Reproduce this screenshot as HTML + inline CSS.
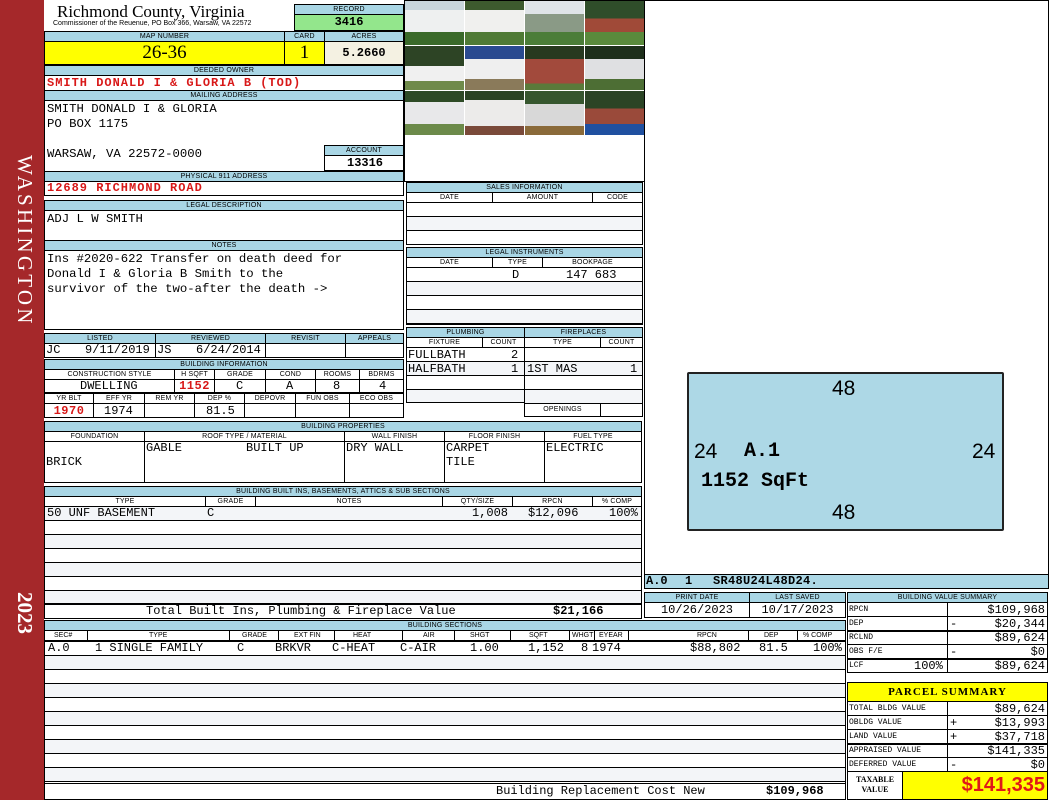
<!DOCTYPE html>
<html><head><meta charset="utf-8">
<style>
*{margin:0;padding:0;box-sizing:border-box}
body{width:1050px;height:800px;position:relative;background:#fff;overflow:hidden;font-family:"Liberation Mono",monospace;color:#000}
div{position:absolute}
.h{background:#a9d6e5;border:1px solid #000;font:7px/9px "Liberation Sans",sans-serif;text-align:center;height:11px;letter-spacing:.2px}
.w{background:#fff}
.b{border:1px solid #000}
.v{font:12px/14px "Liberation Mono",monospace;white-space:pre}
.r{color:#d81818;font-weight:bold;letter-spacing:1px}
.ph{width:59px;height:44px}
.lines{border:1px solid #000;background:repeating-linear-gradient(#fff 0 13px,#000 13px 14px,#f3f5f8 14px 27px,#000 27px 28px)}
.lines2{border:1px solid #000;background:repeating-linear-gradient(#f3f5f8 0 13px,#000 13px 14px,#fff 14px 27px,#000 27px 28px)}
.s{font:8px/14px "Liberation Mono",monospace}
.sg{position:absolute;left:2px;top:0}
</style></head><body>
<!-- sidebar -->
<div style="left:0;top:0;width:44px;height:800px;background:#a5282a"></div>
<div style="left:35px;top:155px;transform:rotate(90deg);transform-origin:0 0;font:21px/21px 'Liberation Serif',serif;color:#fff;white-space:nowrap;letter-spacing:3.2px">WASHINGTON</div>
<div style="left:35px;top:592px;transform:rotate(90deg);transform-origin:0 0;font:bold 21px/21px 'Liberation Serif',serif;color:#fff">2023</div>

<!-- header -->
<div style="left:57px;top:2px;font:17px/19px 'Liberation Serif',serif">Richmond County, Virginia</div>
<div style="left:53px;top:20px;font:7px/8px 'Liberation Sans',sans-serif">Commissioner of the Reuenue, PO Box 366, Warsaw, VA 22572</div>
<div class="h" style="left:294px;top:4px;width:110px">RECORD</div>
<div class="b" style="left:294px;top:14px;width:110px;height:17px;background:#93e68c;text-align:center;font:bold 12px/15px 'Liberation Mono',monospace">3416</div>

<div class="h" style="left:44px;top:31px;width:241px">MAP NUMBER</div>
<div class="h" style="left:284px;top:31px;width:41px">CARD</div>
<div class="h" style="left:324px;top:31px;width:80px">ACRES</div>
<div class="b" style="left:44px;top:41px;width:241px;height:24px;background:#ffff00;text-align:center;font:19px/22px 'Liberation Serif',serif">26-36</div>
<div class="b" style="left:284px;top:41px;width:41px;height:24px;background:#ffff00;text-align:center;font:19px/22px 'Liberation Serif',serif">1</div>
<div class="b" style="left:324px;top:41px;width:80px;height:24px;background:#f4f1e2;text-align:center;font:bold 12px/22px 'Liberation Mono',monospace">5.2660</div>

<div class="h" style="left:44px;top:65px;width:360px">DEEDED OWNER</div>
<div class="b" style="left:44px;top:75px;width:360px;height:16px"></div>
<div class="v r" style="left:47px;top:76px">SMITH DONALD I &amp; GLORIA B (TOD)</div>
<div class="h" style="left:44px;top:90px;width:360px">MAILING ADDRESS</div>
<div class="b" style="left:44px;top:100px;width:360px;height:72px"></div>
<div class="v" style="left:47px;top:102px;font-size:12.3px;line-height:15px">SMITH DONALD I &amp; GLORIA
PO BOX 1175

WARSAW, VA 22572-0000</div>
<div class="h" style="left:324px;top:145px;width:80px">ACCOUNT</div>
<div class="b v" style="left:324px;top:155px;width:80px;height:16px;font-weight:bold;padding-left:22px;line-height:15px">13316</div>
<div class="h" style="left:44px;top:171px;width:360px">PHYSICAL 911 ADDRESS</div>
<div class="b" style="left:44px;top:181px;width:360px;height:15px"></div>
<div class="v r" style="left:47px;top:181px">12689 RICHMOND ROAD</div>

<div class="h" style="left:44px;top:200px;width:360px">LEGAL DESCRIPTION</div>
<div class="b" style="left:44px;top:210px;width:360px;height:31px"></div>
<div class="v" style="left:47px;top:212px;font-size:12.3px">ADJ L W SMITH</div>
<div class="h" style="left:44px;top:240px;width:360px">NOTES</div>
<div class="b" style="left:44px;top:250px;width:360px;height:80px"></div>
<div class="v" style="left:47px;top:252px;font-size:12.3px;line-height:15px">Ins #2020-622 Transfer on death deed for
Donald I &amp; Gloria B Smith to the
survivor of the two-after the death -&gt;</div>

<!-- listed -->
<div class="h" style="left:44px;top:333px;width:112px">LISTED</div>
<div class="h" style="left:155px;top:333px;width:111px">REVIEWED</div>
<div class="h" style="left:265px;top:333px;width:81px">REVISIT</div>
<div class="h" style="left:345px;top:333px;width:59px">APPEALS</div>
<div class="b" style="left:44px;top:343px;width:112px;height:15px"></div>
<div class="b" style="left:155px;top:343px;width:111px;height:15px"></div>
<div class="b" style="left:265px;top:343px;width:81px;height:15px"></div>
<div class="b" style="left:345px;top:343px;width:59px;height:15px"></div>
<div class="v" style="left:46px;top:343px">JC</div>
<div class="v" style="left:85px;top:343px">9/11/2019</div>
<div class="v" style="left:157px;top:343px">JS</div>
<div class="v" style="left:196px;top:343px">6/24/2014</div>

<!-- building info -->
<div class="h" style="left:44px;top:359px;width:360px">BUILDING INFORMATION</div>
<div class="h w" style="left:44px;top:369px;width:131px">CONSTRUCTION STYLE</div>
<div class="h w" style="left:174px;top:369px;width:41px">H SQFT</div>
<div class="h w" style="left:214px;top:369px;width:52px">GRADE</div>
<div class="h w" style="left:265px;top:369px;width:51px">COND</div>
<div class="h w" style="left:315px;top:369px;width:45px">ROOMS</div>
<div class="h w" style="left:359px;top:369px;width:45px">BDRMS</div>
<div class="b" style="left:44px;top:379px;width:131px;height:14px"></div>
<div class="b" style="left:174px;top:379px;width:41px;height:14px"></div>
<div class="b" style="left:214px;top:379px;width:52px;height:14px"></div>
<div class="b" style="left:265px;top:379px;width:51px;height:14px"></div>
<div class="b" style="left:315px;top:379px;width:45px;height:14px"></div>
<div class="b" style="left:359px;top:379px;width:45px;height:14px"></div>
<div class="v" style="left:80px;top:379px">DWELLING</div>
<div class="v r" style="left:174px;top:379px;letter-spacing:0.5px;width:41px;text-align:center">1152</div>
<div class="v" style="left:236px;top:379px">C</div>
<div class="v" style="left:286px;top:379px">A</div>
<div class="v" style="left:333px;top:379px">8</div>
<div class="v" style="left:379px;top:379px">4</div>
<div class="h w" style="left:44px;top:393px;width:50px">YR BLT</div>
<div class="h w" style="left:93px;top:393px;width:52px">EFF YR</div>
<div class="h w" style="left:144px;top:393px;width:51px">REM YR</div>
<div class="h w" style="left:194px;top:393px;width:51px">DEP %</div>
<div class="h w" style="left:244px;top:393px;width:52px">DEPOVR</div>
<div class="h w" style="left:295px;top:393px;width:55px">FUN OBS</div>
<div class="h w" style="left:349px;top:393px;width:55px">ECO OBS</div>
<div class="b" style="left:44px;top:403px;width:50px;height:15px"></div>
<div class="b" style="left:93px;top:403px;width:52px;height:15px"></div>
<div class="b" style="left:144px;top:403px;width:51px;height:15px"></div>
<div class="b" style="left:194px;top:403px;width:51px;height:15px"></div>
<div class="b" style="left:244px;top:403px;width:52px;height:15px"></div>
<div class="b" style="left:295px;top:403px;width:55px;height:15px"></div>
<div class="b" style="left:349px;top:403px;width:55px;height:15px"></div>
<div class="v r" style="left:44px;top:404px;width:50px;text-align:center;letter-spacing:0.5px">1970</div>
<div class="v" style="left:104px;top:404px">1974</div>
<div class="v" style="left:206px;top:404px">81.5</div>

<!-- building properties -->
<div class="h" style="left:44px;top:421px;width:598px">BUILDING PROPERTIES</div>
<div class="h w" style="left:44px;top:431px;width:101px">FOUNDATION</div>
<div class="h w" style="left:144px;top:431px;width:201px">ROOF TYPE / MATERIAL</div>
<div class="h w" style="left:344px;top:431px;width:101px">WALL FINISH</div>
<div class="h w" style="left:444px;top:431px;width:101px">FLOOR FINISH</div>
<div class="h w" style="left:544px;top:431px;width:98px">FUEL TYPE</div>
<div class="b" style="left:44px;top:441px;width:101px;height:42px"></div>
<div class="b" style="left:144px;top:441px;width:201px;height:42px"></div>
<div class="b" style="left:344px;top:441px;width:101px;height:42px"></div>
<div class="b" style="left:444px;top:441px;width:101px;height:42px"></div>
<div class="b" style="left:544px;top:441px;width:98px;height:42px"></div>
<div class="v" style="left:46px;top:455px">BRICK</div>
<div class="v" style="left:146px;top:441px">GABLE</div>
<div class="v" style="left:246px;top:441px">BUILT UP</div>
<div class="v" style="left:346px;top:441px">DRY WALL</div>
<div class="v" style="left:446px;top:441px">CARPET
TILE</div>
<div class="v" style="left:546px;top:441px">ELECTRIC</div>

<!-- built ins -->
<div class="h" style="left:44px;top:486px;width:598px">BUILDING BUILT INS, BASEMENTS, ATTICS &amp; SUB SECTIONS</div>
<div class="h w" style="left:44px;top:496px;width:162px">TYPE</div>
<div class="h w" style="left:205px;top:496px;width:51px">GRADE</div>
<div class="h w" style="left:255px;top:496px;width:188px">NOTES</div>
<div class="h w" style="left:442px;top:496px;width:71px">QTY/SIZE</div>
<div class="h w" style="left:512px;top:496px;width:81px">RPCN</div>
<div class="h w" style="left:592px;top:496px;width:50px">% COMP</div>
<div class="lines2" style="left:44px;top:506px;width:598px;height:99px"></div>
<div class="v" style="left:47px;top:506px">50 UNF BASEMENT</div>
<div class="v" style="left:207px;top:506px">C</div>
<div class="v" style="left:472px;top:506px">1,008</div>
<div class="v" style="left:528px;top:506px">$12,096</div>
<div class="v" style="left:609px;top:506px">100%</div>
<div class="b" style="left:44px;top:603px;width:598px;height:16px"></div>
<div class="v" style="left:146px;top:604px">Total Built Ins, Plumbing &amp; Fireplace Value</div>
<div class="v" style="left:553px;top:604px;font-weight:bold">$21,166</div>

<!-- building sections -->
<div class="h" style="left:44px;top:620px;width:802px">BUILDING SECTIONS</div>
<div style="left:44px;top:630px;width:802px;height:11px;font:7px/11px 'Liberation Sans',sans-serif;border:1px solid #000;border-top:0">
<div style="left:9px">SEC#</div><div style="left:104px">TYPE</div><div style="left:197px">GRADE</div><div style="left:249px">EXT FIN</div><div style="left:308px">HEAT</div><div style="left:378px">AIR</div><div style="left:425px">SHGT</div><div style="left:484px">SQFT</div><div style="left:527px">WHGT</div><div style="left:554px">EYEAR</div><div style="left:652px">RPCN</div><div style="left:719px">DEP</div><div style="left:758px">% COMP</div>
<div style="left:42px;top:0;height:11px;border-left:1px solid #000"></div>
<div style="left:184px;top:0;height:11px;border-left:1px solid #000"></div>
<div style="left:233px;top:0;height:11px;border-left:1px solid #000"></div>
<div style="left:289px;top:0;height:11px;border-left:1px solid #000"></div>
<div style="left:357px;top:0;height:11px;border-left:1px solid #000"></div>
<div style="left:409px;top:0;height:11px;border-left:1px solid #000"></div>
<div style="left:465px;top:0;height:11px;border-left:1px solid #000"></div>
<div style="left:524px;top:0;height:11px;border-left:1px solid #000"></div>
<div style="left:549px;top:0;height:11px;border-left:1px solid #000"></div>
<div style="left:583px;top:0;height:11px;border-left:1px solid #000"></div>
<div style="left:703px;top:0;height:11px;border-left:1px solid #000"></div>
<div style="left:752px;top:0;height:11px;border-left:1px solid #000"></div>
</div>
<div class="lines" style="left:44px;top:641px;width:802px;height:143px"></div>
<div class="v" style="left:48px;top:641px">A.0</div>
<div class="v" style="left:95px;top:641px">1 SINGLE FAMILY</div>
<div class="v" style="left:237px;top:641px">C</div>
<div class="v" style="left:275px;top:641px">BRKVR</div>
<div class="v" style="left:332px;top:641px">C-HEAT</div>
<div class="v" style="left:400px;top:641px">C-AIR</div>
<div class="v" style="left:470px;top:641px">1.00</div>
<div class="v" style="left:528px;top:641px">1,152</div>
<div class="v" style="left:581px;top:641px">8</div>
<div class="v" style="left:592px;top:641px">1974</div>
<div class="v" style="left:690px;top:641px">$88,802</div>
<div class="v" style="left:759px;top:641px">81.5</div>
<div class="v" style="left:813px;top:641px">100%</div>
<div class="b" style="left:44px;top:783px;width:802px;height:17px"></div>
<div class="v" style="left:496px;top:784px">Building Replacement Cost New</div>
<div class="v" style="left:766px;top:784px;font-weight:bold">$109,968</div>

<!-- photos -->
<div style="left:404px;top:0;width:241px;height:182px;border:1px solid #000;background:#fff"></div>
<div style="left:405px;top:1px;width:240px;height:134px;background:#fff">
<div class="ph" style="left:0;top:0;background:linear-gradient(#c8d6dc 0 20%,#eef0f0 20% 70%,#3a6a2a 70%)"></div>
<div class="ph" style="left:60px;top:0;background:linear-gradient(#3d5a2e 0 20%,#f0f0ee 20% 70%,#4f7a35 70%)"></div>
<div class="ph" style="left:120px;top:0;background:linear-gradient(#dfe4e8 0 30%,#8a9a86 30% 70%,#4b7d38 70%)"></div>
<div class="ph" style="left:180px;top:0;background:linear-gradient(#2f4d2a 0 40%,#a04a38 40% 70%,#5a8a3c 70%)"></div>
<div class="ph" style="left:0;top:45px;background:linear-gradient(#2d4425 0 45%,#f0f0f0 45% 80%,#6f8a4a 80%)"></div>
<div class="ph" style="left:60px;top:45px;background:linear-gradient(#2a4a90 0 30%,#efefef 30% 75%,#8a7a5a 75%)"></div>
<div class="ph" style="left:120px;top:45px;background:linear-gradient(#27391f 0 30%,#a24a3c 30% 85%,#5a7a3a 85%)"></div>
<div class="ph" style="left:180px;top:45px;background:linear-gradient(#1e2f1b 0 30%,#dfe0e2 30% 75%,#4d6e34 75%)"></div>
<div class="ph" style="left:0;top:90px;background:linear-gradient(#2d4a25 0 25%,#e8e8ea 25% 75%,#6c8a4a 75%)"></div>
<div class="ph" style="left:60px;top:90px;background:linear-gradient(#2a4423 0 20%,#ecebea 20% 80%,#7a4a3a 80%)"></div>
<div class="ph" style="left:120px;top:90px;background:linear-gradient(#36562e 0 30%,#d8d8d8 30% 80%,#8a6a3a 80%)"></div>
<div class="ph" style="left:180px;top:90px;background:linear-gradient(#2b4425 0 40%,#9a4a3a 40% 75%,#2050a0 75%)"></div>
</div>

<!-- sales -->
<div class="h" style="left:406px;top:182px;width:237px">SALES INFORMATION</div>
<div class="h w" style="left:406px;top:192px;width:87px">DATE</div>
<div class="h w" style="left:492px;top:192px;width:101px">AMOUNT</div>
<div class="h w" style="left:592px;top:192px;width:51px">CODE</div>
<div class="lines" style="left:406px;top:202px;width:237px;height:43px"></div>
<div class="h" style="left:406px;top:247px;width:237px">LEGAL INSTRUMENTS</div>
<div class="h w" style="left:406px;top:257px;width:87px">DATE</div>
<div class="h w" style="left:492px;top:257px;width:51px">TYPE</div>
<div class="h w" style="left:542px;top:257px;width:101px">BOOKPAGE</div>
<div class="lines" style="left:406px;top:267px;width:237px;height:58px"></div>
<div class="v" style="left:512px;top:268px">D</div>
<div class="v" style="left:566px;top:268px">147 683</div>

<!-- plumbing -->
<div class="h" style="left:406px;top:327px;width:119px">PLUMBING</div>
<div class="h" style="left:524px;top:327px;width:119px">FIREPLACES</div>
<div class="h w" style="left:406px;top:337px;width:77px">FIXTURE</div>
<div class="h w" style="left:482px;top:337px;width:43px">COUNT</div>
<div class="h w" style="left:524px;top:337px;width:77px">TYPE</div>
<div class="h w" style="left:600px;top:337px;width:43px">COUNT</div>
<div class="lines" style="left:406px;top:347px;width:119px;height:56px"></div>
<div class="lines" style="left:524px;top:347px;width:119px;height:70px"></div>
<div class="v" style="left:408px;top:348px">FULLBATH</div>
<div class="v" style="left:511px;top:348px">2</div>
<div class="v" style="left:408px;top:362px">HALFBATH</div>
<div class="v" style="left:511px;top:362px">1</div>
<div class="v" style="left:527px;top:362px">1ST MAS</div>
<div class="v" style="left:630px;top:362px">1</div>
<div class="h w" style="left:524px;top:403px;width:77px;height:14px;line-height:12px">OPENINGS</div>
<div class="b" style="left:600px;top:403px;width:43px;height:14px;background:#fff"></div>

<!-- sketch -->
<div style="left:644px;top:0;width:405px;height:575px;border:1px solid #000;background:#fff"></div>
<div style="left:687px;top:372px;width:317px;height:159px;border:2px solid #222;border-radius:2px;background:#add8e6;font:21px 'Liberation Sans',sans-serif">
<div style="left:143px;top:3px">48</div>
<div style="left:143px;top:127px">48</div>
<div style="left:5px;top:66px">24</div>
<div style="left:283px;top:66px">24</div>
<div style="left:55px;top:66px;font:bold 20px 'Liberation Mono',monospace">A.1</div>
<div style="left:12px;top:96px;font:bold 20px 'Liberation Mono',monospace">1152 SqFt</div>
</div>
<div style="left:644px;top:574px;width:405px;height:15px;border:1px solid #000;background:#add8e6"></div>
<div class="v" style="left:646px;top:574px;font-weight:bold">A.0</div>
<div class="v" style="left:685px;top:574px;font-weight:bold">1</div>
<div class="v" style="left:713px;top:574px;font-weight:bold;letter-spacing:0.3px">SR48U24L48D24.</div>

<!-- print date -->
<div class="h" style="left:644px;top:592px;width:106px">PRINT DATE</div>
<div class="h" style="left:749px;top:592px;width:97px">LAST SAVED</div>
<div class="b v" style="left:644px;top:602px;width:106px;height:16px;text-align:center;line-height:15px">10/26/2023</div>
<div class="b v" style="left:749px;top:602px;width:97px;height:16px;text-align:center;line-height:15px">10/17/2023</div>

<!-- building value summary -->
<div class="h" style="left:847px;top:592px;width:201px">BUILDING VALUE SUMMARY</div>
<div style="left:847px;top:602px;width:201px;height:71px">
<div class="b s" style="left:0;top:0;width:101px;height:15px;padding-left:1px">RPCN</div><div class="b v" style="left:100px;top:0;width:101px;height:15px;text-align:right;padding-right:2px">$109,968</div>
<div class="b s" style="left:0;top:14px;width:101px;height:15px;padding-left:1px">DEP</div><div class="b v" style="left:100px;top:14px;width:101px;height:15px;text-align:right;padding-right:2px"><span class="sg">-</span>$20,344</div>
<div class="b s" style="left:0;top:28px;width:101px;height:15px;padding-left:1px;border-top-width:2px;line-height:12px">RCLND</div><div class="b v" style="left:100px;top:28px;width:101px;height:15px;text-align:right;padding-right:2px;border-top-width:2px;line-height:12px">$89,624</div>
<div class="b s" style="left:0;top:42px;width:101px;height:15px;padding-left:1px">OBS F/E</div><div class="b v" style="left:100px;top:42px;width:101px;height:15px;text-align:right;padding-right:2px"><span class="sg">-</span>$0</div>
<div class="b s" style="left:0;top:56px;width:101px;height:15px;padding-left:1px;border-top-width:2px;line-height:12px">LCF<span class="v" style="position:absolute;left:66px;top:0;line-height:12px">100%</span></div><div class="b v" style="left:100px;top:56px;width:101px;height:15px;text-align:right;padding-right:2px;border-top-width:2px;line-height:12px">$89,624</div>
</div>

<!-- parcel summary -->
<div class="b" style="left:847px;top:682px;width:201px;height:20px;background:#ffff00;text-align:center;font:bold 11px/18px 'Liberation Serif',serif;letter-spacing:1px">PARCEL SUMMARY</div>
<div style="left:847px;top:701px;width:201px;height:71px">
<div class="b s" style="left:0;top:0;width:101px;height:15px;padding-left:1px">TOTAL BLDG VALUE</div><div class="b v" style="left:100px;top:0;width:101px;height:15px;text-align:right;padding-right:2px">$89,624</div>
<div class="b s" style="left:0;top:14px;width:101px;height:15px;padding-left:1px">OBLDG VALUE</div><div class="b v" style="left:100px;top:14px;width:101px;height:15px;text-align:right;padding-right:2px"><span class="sg">+</span>$13,993</div>
<div class="b s" style="left:0;top:28px;width:101px;height:15px;padding-left:1px">LAND VALUE</div><div class="b v" style="left:100px;top:28px;width:101px;height:15px;text-align:right;padding-right:2px"><span class="sg">+</span>$37,718</div>
<div class="b s" style="left:0;top:42px;width:101px;height:15px;padding-left:1px;border-top-width:2px;line-height:12px">APPRAISED VALUE</div><div class="b v" style="left:100px;top:42px;width:101px;height:15px;text-align:right;padding-right:2px;border-top-width:2px;line-height:12px">$141,335</div>
<div class="b s" style="left:0;top:56px;width:101px;height:15px;padding-left:1px">DEFERRED VALUE</div><div class="b v" style="left:100px;top:56px;width:101px;height:15px;text-align:right;padding-right:2px"><span class="sg">-</span>$0</div>
</div>
<div class="b" style="left:847px;top:771px;width:56px;height:29px;text-align:center;font:bold 8px/10px 'Liberation Serif',serif;padding-top:3px">TAXABLE<br>VALUE</div>
<div class="b" style="left:902px;top:771px;width:146px;height:29px;background:#ffff00;text-align:right;padding-right:2px;color:#e01818;font:bold 20px/27px 'Liberation Sans',sans-serif">$141,335</div>
</body></html>
